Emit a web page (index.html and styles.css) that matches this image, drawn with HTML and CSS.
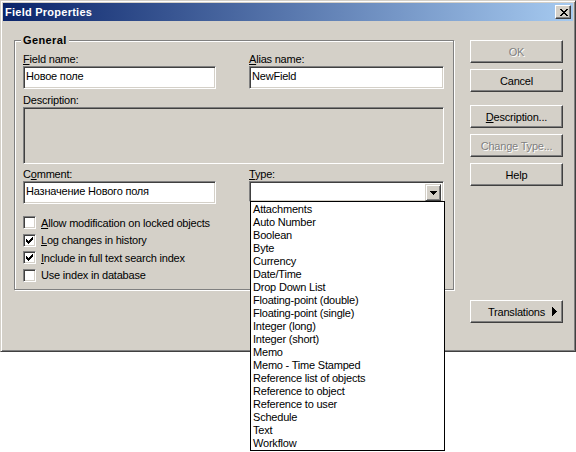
FILE: index.html
```html
<!DOCTYPE html>
<html lang="en">
<head>
  <meta charset="UTF-8">
  <title>Field Properties</title>
  <link rel="stylesheet" href="styles.css">
</head>
<body>

  <div class="dialog">
    <div class="titlebar">
      <span class="title">Field Properties</span>
      <span class="close">
        <svg width="8" height="7" viewBox="0 0 8 7"><path d="M0 0h2v1H0zM6 0h2v1H6zM1 1h2v1H1zM5 1h2v1H5zM2 2h4v1H2zM3 3h2v1H3zM2 4h4v1H2zM1 5h2v1H1zM5 5h2v1H5zM0 6h2v1H0zM6 6h2v1H6z" fill="#000"/></svg>
      </span>
    </div>

    <div class="client">
      <!-- General group -->
      <div class="group">
        <span class="group-title">General</span>

        <div class="row">
          <div class="field">
            <label><u>F</u>ield name:</label>
            <div class="edit">Новое поле</div>
          </div>
          <div class="field">
            <label><u>A</u>lias name:</label>
            <div class="edit">NewField</div>
          </div>
        </div>

        <div class="field desc">
          <label>Description:</label>
          <div class="memo"></div>
        </div>

        <div class="row comment-row">
          <div class="field">
            <label>C<u>o</u>mment:</label>
            <div class="edit">Назначение Нового поля</div>
          </div>
          <div class="field">
            <label><u>T</u>ype:</label>
            <div class="combo">
              <span class="combo-btn">
                <svg width="7" height="4" viewBox="0 0 7 4"><path d="M0 0h7v1H0zM1 1h5v1H1zM2 2h3v1H2zM3 3h1v1H3z" fill="#000"/></svg>
              </span>
              <ul class="dropdown">
                <li>Attachments</li>
                <li>Auto Number</li>
                <li>Boolean</li>
                <li>Byte</li>
                <li>Currency</li>
                <li>Date/Time</li>
                <li>Drop Down List</li>
                <li>Floating-point (double)</li>
                <li>Floating-point (single)</li>
                <li>Integer (long)</li>
                <li>Integer (short)</li>
                <li>Memo</li>
                <li>Memo - Time Stamped</li>
                <li>Reference list of objects</li>
                <li>Reference to object</li>
                <li>Reference to user</li>
                <li>Schedule</li>
                <li>Text</li>
                <li>Workflow</li>
              </ul>
            </div>
          </div>
        </div>

        <div class="checks">
          <div class="check"><span class="box"></span><span><u>A</u>llow modification on locked objects</span></div>
          <div class="check"><span class="box checked"><svg width="7" height="7" viewBox="0 0 7 7"><path d="M6 0h1v1H6zM5 1h2v1H5zM0 2h1v1H0zM4 2h3v1H4zM0 3h2v1H0zM3 3h3v1H3zM0 4h5v1H0zM1 5h3v1H1zM2 6h1v1H2z" fill="#000"/></svg></span><span><u>L</u>og changes in history</span></div>
          <div class="check"><span class="box checked"><svg width="7" height="7" viewBox="0 0 7 7"><path d="M6 0h1v1H6zM5 1h2v1H5zM0 2h1v1H0zM4 2h3v1H4zM0 3h2v1H0zM3 3h3v1H3zM0 4h5v1H0zM1 5h3v1H1zM2 6h1v1H2z" fill="#000"/></svg></span><span><u>I</u>nclude in full text search index</span></div>
          <div class="check"><span class="box"></span><span>Use index in database</span></div>
        </div>
      </div>

      <!-- Buttons -->
      <div class="buttons">
        <div class="btn disabled">OK</div>
        <div class="btn">Cancel</div>
        <div class="btn gap"><span><u>D</u>escription...</span></div>
        <div class="btn disabled">Change Type...</div>
        <div class="btn">Help</div>
        <div class="btn translations">
          Translations
          <svg class="arrow" width="5" height="9" viewBox="0 0 5 9"><path d="M0 0h1v1H0zM0 1h2v1H0zM0 2h3v1H0zM0 3h4v1H0zM0 4h5v1H0zM0 5h4v1H0zM0 6h3v1H0zM0 7h2v1H0zM0 8h1v1H0z" fill="#000"/></svg>
        </div>
      </div>
    </div>
  </div>

</body>
</html>
```

FILE: styles.css
```css
html, body {
  height: 100%;
}

body {
  margin: 0;
  min-height: 452px;
  background-color: #ffffff;
  font-family: 'Liberation Sans', Arial, sans-serif;
  font-size: 11px;
  letter-spacing: -0.2px;
  color: #000;
}

u {
  text-decoration-thickness: 1px;
  text-underline-offset: 1px;
}

.dialog {
  width: 576px;
  height: 352px;
  box-sizing: border-box;
  padding: 2px;
  background-color: #d4d0c8;
  border: 1px solid;
  border-color: #d4d0c8 #404040 #404040 #d4d0c8;
  box-shadow: inset 1px 1px #fff, inset -1px -1px #808080;
}

.titlebar {
  height: 18px;
  display: flex;
  align-items: center;
  padding-left: 2px;
  background: linear-gradient(to right, #0a246a, #a6caf0);
  color: #fff;
}

.title {
  font-weight: bold;
  letter-spacing: 0.25px;
}

.close {
  margin-left: auto;
  margin-right: 2px;
  width: 16px;
  height: 14px;
  box-sizing: border-box;
  display: flex;
  align-items: center;
  justify-content: center;
  padding-left: 1px;
  background-color: #d4d0c8;
  border: 1px solid;
  border-color: #fff #404040 #404040 #fff;
  box-shadow: inset -1px -1px #808080;
}

.client {
  display: flex;
  align-items: flex-start;
  padding: 0 10px 0 11px;
}

/* group box */
.group {
  position: relative;
  width: 440px;
  height: 250px;
  box-sizing: border-box;
  margin-top: 19px;
  padding: 12px 9px 0 8px;
  border: 1px solid #808080;
  box-shadow: inset 1px 1px #fff, 1px 1px #fff;
}

.group-title {
  position: absolute;
  top: -7px;
  left: 6px;
  padding: 0 2px;
  line-height: 13px;
  font-weight: bold;
  letter-spacing: 0.4px;
  background-color: #d4d0c8;
}

.row {
  display: grid;
  grid-template-columns: 193px 195px;
  column-gap: 33px;
}

.field label {
  display: block;
  line-height: 13px;
}

.desc {
  margin-top: 5px;
}

.comment-row {
  margin-top: 4px;
}

.edit, .memo, .combo, .box {
  box-sizing: border-box;
  border: 1px solid;
  border-color: #808080 #fff #fff #808080;
  box-shadow: inset 1px 1px #404040, inset -1px -1px #d4d0c8;
}

.edit {
  height: 23px;
  padding: 0 2px;
  line-height: 19px;
  background-color: #fff;
  white-space: nowrap;
}

.memo {
  height: 57px;
  background-color: #d4d0c8;
}

.combo {
  position: relative;
  height: 21px;
  padding: 2px;
  display: flex;
  justify-content: flex-end;
  background-color: #fff;
}

.combo-btn {
  width: 16px;
  height: 17px;
  box-sizing: border-box;
  display: flex;
  align-items: center;
  justify-content: center;
  background-color: #d4d0c8;
  border: 1px solid;
  border-color: #d4d0c8 #404040 #404040 #d4d0c8;
  box-shadow: inset 1px 1px #fff, inset -1px -1px #808080;
}

.dropdown {
  position: absolute;
  top: 100%;
  left: 0;
  width: 195px;
  box-sizing: border-box;
  margin: 0;
  padding: 1px 0 0;
  list-style: none;
  background-color: #fff;
  border: 1px solid #000;
  z-index: 2;
}

.dropdown li {
  height: 13px;
  line-height: 13px;
  padding-left: 2px;
  white-space: nowrap;
}

/* checkboxes */
.checks {
  margin-top: 12px;
  display: flex;
  flex-direction: column;
  gap: 4.67px;
}

.check {
  display: flex;
  align-items: center;
  height: 13px;
}

.box {
  width: 13px;
  height: 13px;
  margin-right: 5px;
  flex-shrink: 0;
  display: flex;
  align-items: center;
  justify-content: center;
  background-color: #fff;
}

/* buttons */
.buttons {
  margin-top: 19px;
  margin-left: 16px;
  display: flex;
  flex-direction: column;
  gap: 6px;
}

.btn {
  position: relative;
  width: 93px;
  height: 23px;
  box-sizing: border-box;
  display: flex;
  align-items: center;
  justify-content: center;
  background-color: #d4d0c8;
  border: 1px solid;
  border-color: #fff #404040 #404040 #fff;
  box-shadow: inset -1px -1px #808080;
}

.btn.gap {
  margin-top: 7px;
}

.btn.disabled {
  color: #808080;
  text-shadow: 1px 1px #fff;
}

.btn.translations {
  margin-top: 108px;
}

.btn .arrow {
  position: absolute;
  right: 5px;
  top: 6px;
}
```
